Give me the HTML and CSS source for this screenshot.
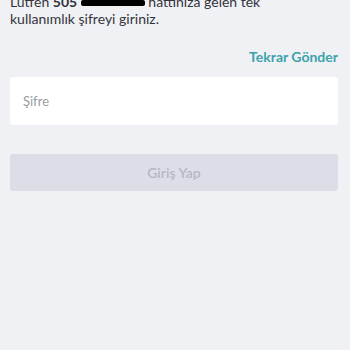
FILE: index.html
```html
<!DOCTYPE html>
<html lang="tr">
<head>
<meta charset="utf-8">
<link rel="stylesheet" href="styles.css">
</head>
<body>
<main class="page">
  <p class="intro">Lütfen <b>505</b> <span class="redact"></span> hattınıza gelen tek kullanımlık şifreyi giriniz.</p>
  <div class="resend-row"><a class="resend">Tekrar Gönder</a></div>
  <div class="field"><span class="placeholder">Şifre</span></div>
  <button class="submit" disabled>Giriş Yap</button>
</main>
</body>
</html>
```
FILE: styles.css
```css
* { box-sizing: border-box; }
html, body { margin: 0; height: 100%; }
body {
  background: #f0f1f5;
  font-family: Lato, "Noto Sans", sans-serif;
  color: #2f3037;
}
.page {
  padding: 0 12px 0 10px;
  display: flex;
  flex-direction: column;
}
.intro {
  margin: -7px 0 0;
  font-size: 14px;
  line-height: 17px;
  width: 270px;
  color: #33343b;
}
.intro b { font-weight: 700; }
.redact {
  display: inline-block;
  width: 64px;
  height: 6px;
  background: #000;
  vertical-align: 1px;
  border-radius: 2px;
}
.resend-row {
  display: flex;
  justify-content: flex-end;
  margin-top: 21px;
}
.resend {
  font-size: 14px;
  font-weight: 700;
  color: #3ba2ab;
  line-height: 17px;
}
.field {
  margin-top: 12px;
  height: 48px;
  background: #fff;
  border-radius: 3px;
  display: flex;
  align-items: center;
  padding-left: 13px;
}
.placeholder {
  font-size: 13px;
  color: #9b9ca3;
}
.submit {
  margin-top: 29px;
  height: 37px;
  border: 0;
  border-radius: 3px;
  background: #dcdde7;
  color: #b6b7c3;
  font-family: Lato, "Noto Sans", sans-serif;
  font-size: 14px;
  font-weight: 600;
  padding: 0;
}
```
